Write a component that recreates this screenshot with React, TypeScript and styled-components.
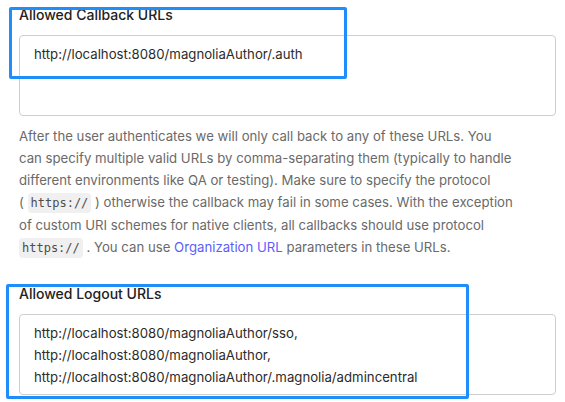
import React from "react";
import styled, { createGlobalStyle } from "styled-components";

const Global = createGlobalStyle`
  html, body { margin: 0; padding: 0; background: #ffffff; }
  body { font-family: Inter, "Noto Sans", sans-serif; }
`;

const Page = styled.div`
  width: 565px;
  height: 402px;
  overflow: hidden;
  box-sizing: border-box;
  padding: 5px 9px 0 19px;
  display: flex;
  flex-direction: column;
`;

const Field = styled.section<{ $gap: number }>`
  position: relative;
  display: flex;
  flex-direction: column;
  margin-top: ${(p) => p.$gap}px;
`;

const Label = styled.label`
  font-size: 14px;
  line-height: 20px;
  font-weight: 500;
  color: #222222;
  margin-bottom: 10px;
`;

const Box = styled.textarea`
  box-sizing: border-box;
  width: 537px;
  height: 81px;
  margin: 0;
  padding: 7px 14px 6px 14px;
  border: 1px solid #cfcfcf;
  border-radius: 4px;
  resize: none;
  overflow: hidden;
  font-family: Inter, "Noto Sans", sans-serif;
  font-size: 13.2px;
  line-height: 22px;
  color: #2b2b2b;
  background: #ffffff;
  outline: none;
`;

const Help = styled.p`
  margin: 9px 0 0 0;
  width: 497px;
  font-size: 13.2px;
  line-height: 22px;
  color: #6a6a6a;
`;

const Code = styled.code`
  font-family: "DejaVu Sans Mono", "Liberation Mono", monospace;
  font-size: 12px;
  color: #4d4d4d;
  background: #f0f0f1;
  border-radius: 4px;
  padding: 3px 3px;
`;

const Link = styled.a`
  color: #5d5dff;
  text-decoration: none;
`;

const Highlight = styled.div<{ $l: number; $t: number; $w: number; $h: number }>`
  position: absolute;
  left: ${(p) => p.$l}px;
  top: ${(p) => p.$t}px;
  width: ${(p) => p.$w}px;
  height: ${(p) => p.$h}px;
  box-sizing: border-box;
  border: 3px solid #1f8efa;
  border-radius: 2px;
  pointer-events: none;
`;

export default function App() {
  return (
    <>
      <Global />
      <Page>
        <Field $gap={0}>
          <Label>Allowed Callback URLs</Label>
          <Box readOnly value="http://localhost:8080/magnoliaAuthor/.auth" />
          <Highlight $l={-10} $t={2} $w={338} $h={72} />
        </Field>
        <Help>
          After the user authenticates we will only call back to any of these URLs. You can
          specify multiple valid URLs by comma-separating them (typically to handle different
          environments like QA or testing). Make sure to specify the protocol
          {" (\u00a0"}
          <Code>https://</Code> ) otherwise the callback may fail in some cases. With the
          exception of custom URI schemes for native clients, all callbacks should use protocol{" "}
          <Code>https://</Code> . You can use <Link href="#">Organization URL</Link> parameters
          in these URLs.
        </Help>
        <Field $gap={25}>
          <Label>Allowed Logout URLs</Label>
          <Box
            readOnly
            value={
              "http://localhost:8080/magnoliaAuthor/sso,\nhttp://localhost:8080/magnoliaAuthor,\nhttp://localhost:8080/magnoliaAuthor/.magnolia/admincentral"
            }
          />
          <Highlight $l={-13} $t={0} $w={463} $h={115} />
        </Field>
      </Page>
    </>
  );
}
